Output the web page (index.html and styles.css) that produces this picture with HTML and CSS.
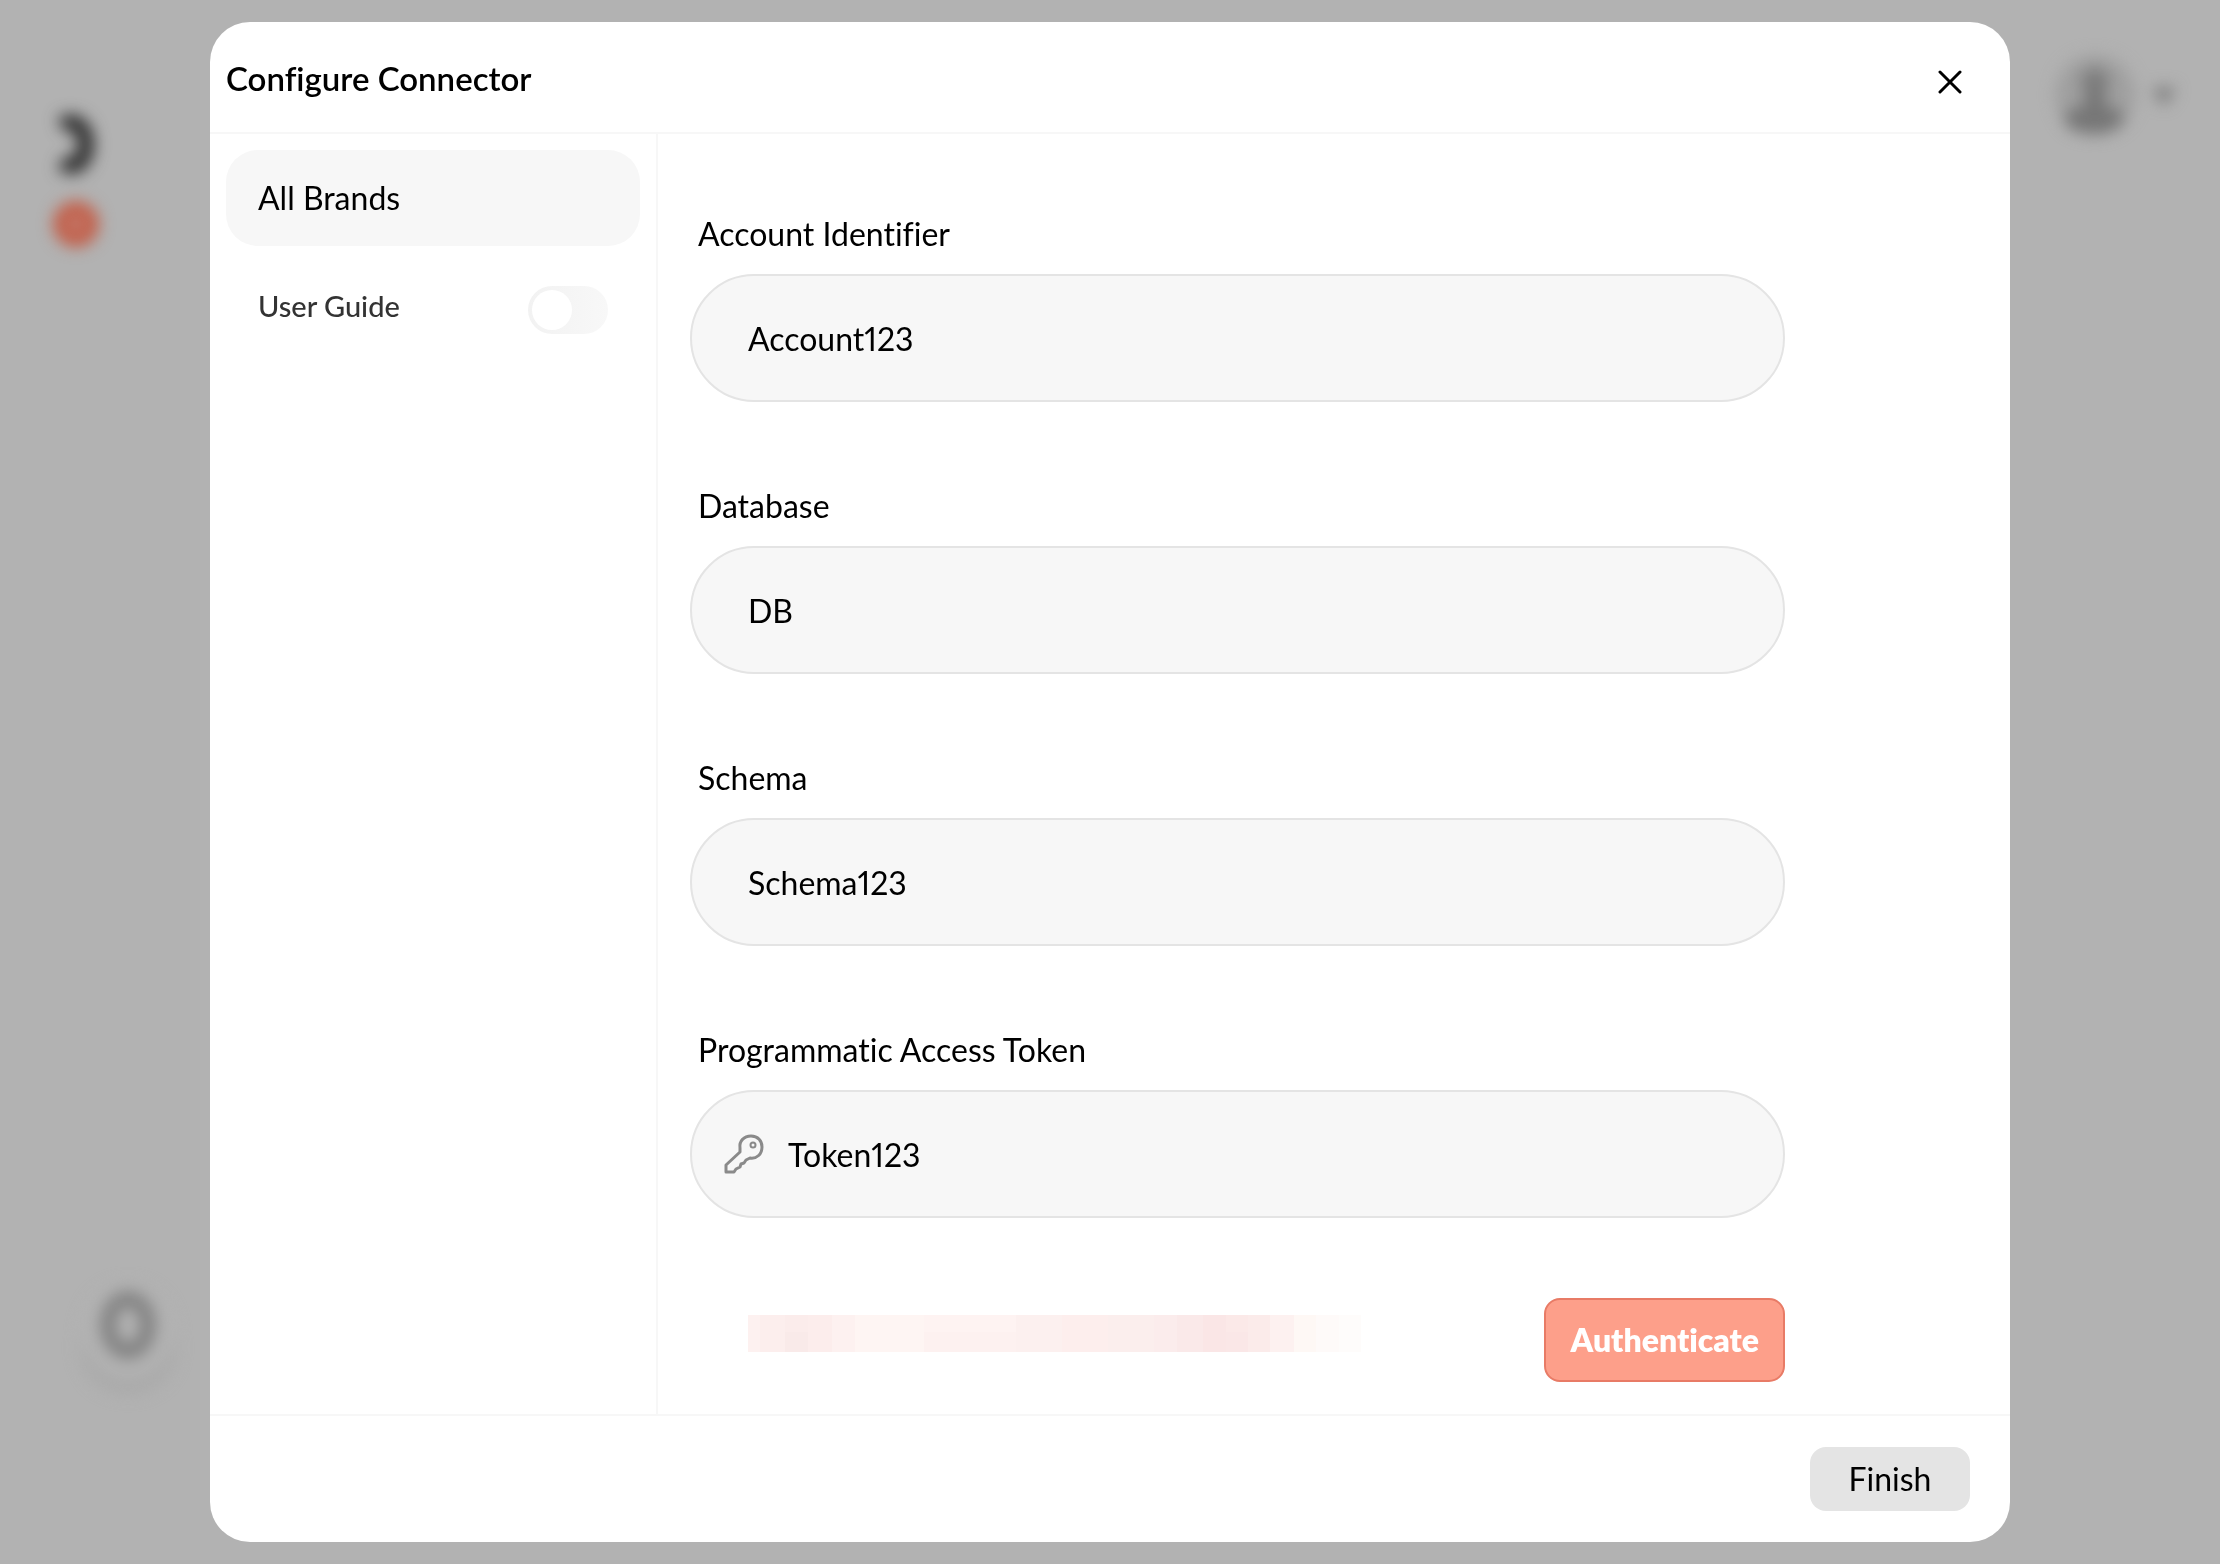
FILE: index.html
```html
<!DOCTYPE html>
<html lang="en">
<head>
<meta charset="utf-8">
<meta name="viewport" content="width=device-width, initial-scale=1">
<title>Configure Connector</title>
<link rel="stylesheet" href="styles.css">
</head>
<body>
<div class="page" aria-hidden="true">
  <div class="page-left">
    <svg class="logo" width="80" height="180" viewBox="0 0 80 180">
      <path d="M26 46C40 36 50 50 50 64C50 80 40 92 26 82" fill="none" stroke="#2c2c2c" stroke-width="16"/>
      <circle cx="40" cy="144" r="16" fill="#c08075" stroke="#c4573f" stroke-width="13"/>
    </svg>
    <svg class="badge" width="120" height="140" viewBox="0 0 120 140">
      <ellipse cx="60" cy="76" rx="48" ry="46" fill="#a9a9a9"/>
      <ellipse cx="60" cy="60" rx="46" ry="48" fill="#b2b2b2"/>
      <ellipse cx="60" cy="53" rx="20" ry="26" fill="none" stroke="#7c7c7c" stroke-width="14"/>
    </svg>
  </div>
  <svg class="account" width="140" height="120" viewBox="0 0 140 120">
    <circle cx="55" cy="55" r="40" fill="#9f9f9f"/>
    <circle cx="55" cy="42" r="14" fill="#7c7c7c"/>
    <path d="M45 50H65V66C76 67 86 74 84 82C74 98 34 98 24 82C24 72 34 67 45 66Z" fill="#767676"/>
    <path d="M112 48H136L124 66Z" fill="#787878"/>
  </svg>
</div>

<div class="overlay">
  <section class="modal" role="dialog" aria-modal="true" aria-labelledby="modal-title">
    <header class="modal-header">
      <h1 class="modal-title" id="modal-title">Configure Connector</h1>
      <button class="close" type="button" aria-label="Close">
        <svg width="24" height="24" viewBox="0 0 24 24"><path d="M2 2L22 22M22 2L2 22" fill="none" stroke="#000" stroke-width="3" stroke-linecap="round"/></svg>
      </button>
    </header>
    <div class="modal-body">
      <aside class="sidebar">
        <button class="brand" type="button">All Brands</button>
        <div class="guide">
          <label for="guide">User Guide</label>
          <input class="switch" id="guide" type="checkbox" role="switch">
        </div>
      </aside>
      <form class="form">
        <div class="field">
          <label class="label" for="account">Account Identifier</label>
          <input class="input" id="account" type="text" value="Account123">
        </div>
        <div class="field">
          <label class="label" for="database">Database</label>
          <input class="input" id="database" type="text" value="DB">
        </div>
        <div class="field">
          <label class="label" for="schema">Schema</label>
          <input class="input" id="schema" type="text" value="Schema123">
        </div>
        <div class="field">
          <label class="label" for="token">Programmatic Access Token</label>
          <div class="input-wrap">
            <svg class="key" width="40" height="40" viewBox="0 0 40 40"><path d="M16 14C15 7 20 2 27 2C34 2 38 7 38 13C38 20 33 25 26 24L22 26L20 29L17 30L16 33L12 35L10 38H2V31L16 18Z" fill="none" stroke="#8a8a8a" stroke-width="3" stroke-linejoin="round"/><circle cx="29" cy="11" r="2.5" fill="none" stroke="#8a8a8a" stroke-width="2"/></svg>
            <input class="input input-icon" id="token" type="text" value="Token123">
          </div>
        </div>
        <div class="actions">
          <svg class="message" width="613" height="37" viewBox="0 0 613 37" shape-rendering="crispEdges" aria-hidden="true">
            <rect width="613" height="37" fill="#fdf1f0"/>
            <rect x="12" width="25" height="37" fill="#fceeed"/>
            <rect x="37" width="23" height="37" fill="#fbeceb"/>
            <rect x="37" y="17" width="23" height="20" fill="#f9eae9"/>
            <rect x="60" width="24" height="37" fill="#fcedec"/>
            <rect x="107" width="69" height="37" fill="#fef5f3"/>
            <rect x="176" width="92" height="17" fill="#fef3f2"/>
            <rect x="176" y="17" width="92" height="20" fill="#fdf1f0"/>
            <rect x="268" width="46" height="37" fill="#fcf0ef"/>
            <rect x="314" width="46" height="37" fill="#fdeeed"/>
            <rect x="360" width="46" height="37" fill="#fbeeed"/>
            <rect x="406" width="23" height="37" fill="#fbecec"/>
            <rect x="429" width="26" height="37" fill="#fae9e9"/>
            <rect x="455" width="23" height="37" fill="#fae6e6"/>
            <rect x="478" width="22" height="17" fill="#fbe9e8"/>
            <rect x="478" y="17" width="22" height="20" fill="#fae7e7"/>
            <rect x="500" width="22" height="37" fill="#fbebea"/>
            <rect x="522" width="24" height="37" fill="#fdf1f0"/>
            <rect x="546" width="22" height="37" fill="#fef8f5"/>
            <rect x="568" width="23" height="37" fill="#fefaf9"/>
            <rect x="591" width="22" height="37" fill="#fefcfb"/>
          </svg>
          <button class="authenticate" type="button">Authenticate</button>
        </div>
      </form>
    </div>
    <footer class="modal-footer">
      <button class="finish" type="button">Finish</button>
    </footer>
  </section>
</div>
</body>
</html>
```
FILE: styles.css
```css
* { box-sizing: border-box; }

body {
  margin: 0;
  background: #b2b2b2;
  color: #000;
  font-family: Lato, "Liberation Sans", sans-serif;
  font-size: 32px;
  line-height: 40px;
  font-variant-ligatures: none;
}

button, input {
  font: inherit;
  color: inherit;
  font-variant-ligatures: none;
  font-variant-numeric: proportional-nums;
}

/* Page behind the dialog, out of focus */
.page {
  position: fixed;
  inset: 0;
  display: flex;
  justify-content: space-between;
  padding: 40px 40px 152px 36px;
}
.page-left {
  display: flex;
  flex-direction: column;
  justify-content: space-between;
  padding-top: 40px;
}
.page svg { filter: blur(8px); overflow: visible; }
.badge { margin-left: 32px; }

.overlay {
  position: relative;
  min-height: 100vh;
  display: flex;
  align-items: center;
  justify-content: center;
  padding: 22px 24px;
}

.modal {
  width: 100%;
  max-width: 1800px;
  background: #fff;
  border-radius: 40px;
  overflow: hidden;
}

.modal-header {
  display: flex;
  align-items: center;
  justify-content: space-between;
  padding: 34px 48px 32px 16px;
  border-bottom: 2px solid #f7f7f7;
}
.modal-title {
  margin: 0;
  font-size: 33px;
  line-height: 44px;
  font-weight: 600;
}
.close {
  display: flex;
  padding: 8px 0 0;
  border: 0;
  background: none;
}

.modal-body { display: flex; }

.sidebar {
  flex: 0 0 448px;
  padding: 16px;
  border-right: 2px solid #f7f7f7;
}
.brand {
  width: 100%;
  height: 96px;
  padding: 0 32px;
  border: 0;
  border-radius: 32px;
  background: #f7f7f7;
  text-align: left;
}
.guide {
  display: flex;
  align-items: flex-start;
  justify-content: space-between;
  padding: 40px 32px;
  font-size: 29px;
  font-weight: 500;
  color: #333;
}
.switch {
  appearance: none;
  display: flex;
  width: 80px;
  height: 48px;
  margin: 0;
  padding: 4px;
  border-radius: 24px;
  background: linear-gradient(90deg, #f2f2f2, #f8f8f8);
}
.switch::before {
  content: "";
  width: 40px;
  height: 40px;
  border-radius: 50%;
  background: #fff;
}
.switch:checked { justify-content: flex-end; background: #fd9f8a; }

.form {
  flex: 1;
  max-width: 1127px;
  padding: 80px 0 32px 32px;
}
.field {
  display: flex;
  flex-direction: column;
  gap: 20px;
  margin-bottom: 84px;
}
.field:nth-last-child(2) { margin-bottom: 80px; }
.label { padding-left: 8px; }
.input {
  width: 100%;
  height: 128px;
  padding: 0 56px;
  border: 2px solid #e4e4e4;
  border-radius: 64px;
  background: #f7f7f7;
}
.input-wrap { position: relative; }
.input-icon { padding-left: 96px; }
.key { position: absolute; left: 34px; top: 44px; }

.actions {
  display: flex;
  align-items: flex-start;
  justify-content: space-between;
  padding-left: 58px;
}
.message { margin-top: 17px; }
.authenticate {
  height: 84px;
  padding: 0 24px;
  border: 2px solid #e87b66;
  border-radius: 16px;
  background: #fd9f8a;
  color: #fff;
  font-weight: 800;
}

.modal-footer {
  display: flex;
  justify-content: flex-end;
  padding: 31px 40px;
  border-top: 2px solid #f7f7f7;
}
.finish {
  width: 160px;
  height: 64px;
  border: 0;
  border-radius: 16px;
  background: #e4e4e4;
}
```
